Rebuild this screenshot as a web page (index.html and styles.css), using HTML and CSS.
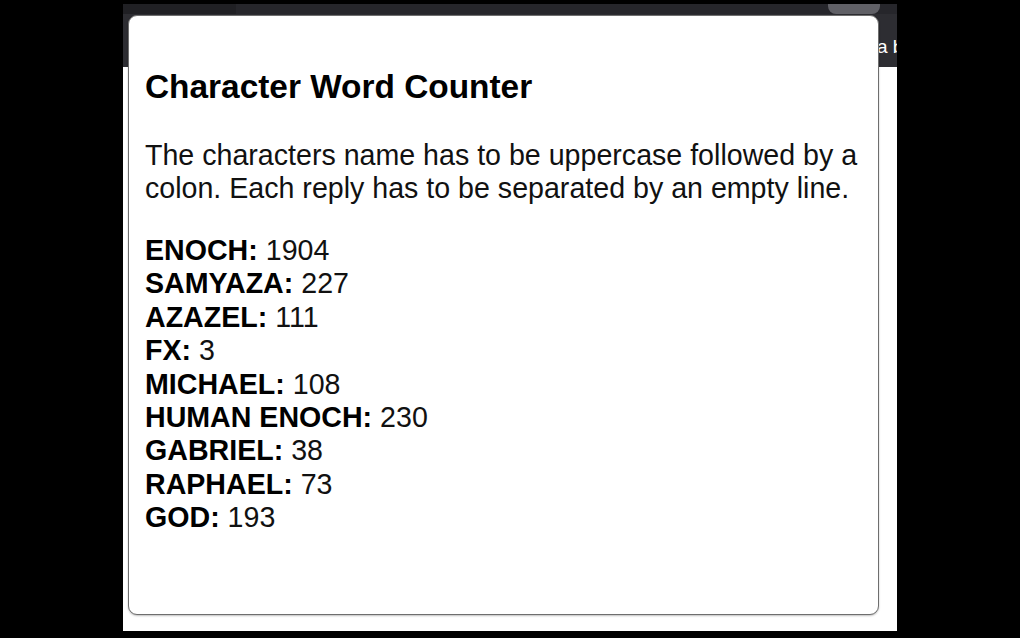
FILE: index.html
```html
<!DOCTYPE html>
<html lang="en">
<head>
<meta charset="utf-8">
<title>Character Word Counter</title>
<link rel="stylesheet" href="styles.css">
</head>
<body>
  <div class="screen">
    <div class="topbar">
      <div class="tabstrip"><div class="tab-left"></div></div>
      <div class="bar-text">a b</div>
    </div>
    <div class="tab"></div>
    <div class="card">
      <h3 class="title">Character Word Counter</h3>
      <p class="desc">The characters name has to be uppercase followed by a colon. Each reply has to be separated by an empty line.</p>
      <div class="counts">
        <div class="row"><b>ENOCH:</b> 1904</div>
        <div class="row"><b>SAMYAZA:</b> 227</div>
        <div class="row"><b>AZAZEL:</b> 111</div>
        <div class="row"><b>FX:</b> 3</div>
        <div class="row"><b>MICHAEL:</b> 108</div>
        <div class="row"><b>HUMAN ENOCH:</b> 230</div>
        <div class="row"><b>GABRIEL:</b> 38</div>
        <div class="row"><b>RAPHAEL:</b> 73</div>
        <div class="row"><b>GOD:</b> 193</div>
      </div>
    </div>
  </div>
</body>
</html>
```

FILE: styles.css
```css
html, body {
  margin: 0;
  padding: 0;
}
body {
  background: #000;
  height: 638px;
  overflow: hidden;
  display: flex;
  justify-content: center;
  align-items: flex-start;
  padding-top: 4px;
  box-sizing: border-box;
  font-family: "Liberation Sans", Arial, sans-serif;
}
.screen {
  width: 774px;
  height: 627px;
  background: #fff;
  position: relative;
  overflow: hidden;
}
.topbar {
  height: 63px;
  background: #2d2d32;
  display: flex;
  flex-direction: column;
}
.tabstrip {
  height: 10px;
  background: #26262b;
  display: flex;
}
.tab-left {
  width: 113px;
  background: #202024;
}
.bar-text {
  color: #fff;
  font-size: 19px;
  line-height: 22px;
  padding-left: 754px;
  padding-top: 22px;
  white-space: nowrap;
}
.tab {
  position: absolute;
  left: 705px;
  top: 0;
  width: 52px;
  height: 10px;
  background: #606066;
  border-radius: 0 0 8px 8px;
}
.card {
  position: absolute;
  left: 5px;
  top: 11px;
  width: 751px;
  height: 600px;
  box-sizing: border-box;
  background: #fff;
  border: 1.5px solid #6e6e6e;
  border-radius: 9px;
  box-shadow: 0 1px 2px rgba(0, 0, 0, 0.25);
  padding: 51.5px 8px 0 16px;
  color: #000;
}
.title {
  margin: 0;
  font-size: 33.4px;
  line-height: 38.4px;
  font-weight: bold;
}
.desc {
  margin: 33px 0 0;
  font-size: 28.6px;
  line-height: 33px;
  color: #111;
}
.counts {
  margin-top: 29px;
  font-size: 28.6px;
  line-height: 33.4px;
  color: #111;
}
.row b {
  color: #000;
}
```
